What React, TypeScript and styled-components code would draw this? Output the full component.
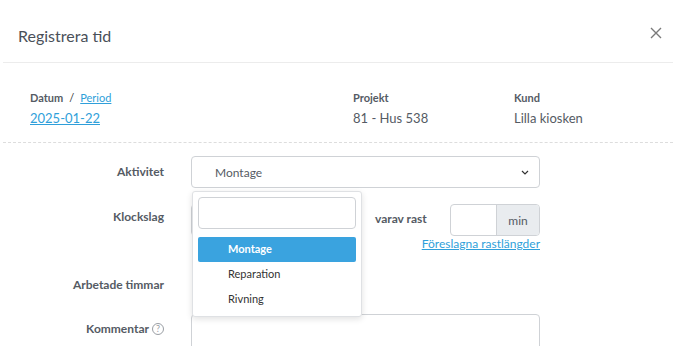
import { createGlobalStyle, styled } from 'styled-components';

const GlobalStyle = createGlobalStyle`
  * { box-sizing: border-box; }
  body {
    margin: 0;
    background: #fff;
    font-family: Lato, "Liberation Sans", sans-serif;
    color: #555b64;
  }
`;

const Modal = styled.div`
  width: 673px;
  height: 346px;
  overflow: hidden;
  padding-left: 3px;
`;

const Header = styled.header`
  height: 63px;
  display: flex;
  align-items: center;
  justify-content: space-between;
  padding: 8px 7px 0 15px;
  border-bottom: 1px solid #ececec;
`;

const Title = styled.h2`
  margin: 0;
  font-size: 16px;
  font-weight: 400;
  color: #4a5059;
`;

const CloseButton = styled.button`
  border: 0;
  background: none;
  padding: 0;
  width: 20px;
  height: 20px;
  margin-top: -5px;
  display: flex;
  align-items: center;
  justify-content: center;
  color: #777;
`;

const Info = styled.section`
  display: grid;
  grid-template-columns: 323px 161px 1fr;
  padding: 28px 0 0 27px;
  height: 80px;
  border-bottom: 1px dashed #ddd;
`;

const InfoLabel = styled.div`
  font-size: 11px;
  font-weight: 700;
  color: #555b64;
  height: 16px;
  display: flex;
  align-items: baseline;
  gap: 6px;
`;

const Slash = styled.span`
  font-weight: 400;
  color: #333;
`;

const SmallLink = styled.a`
  font-size: 11px;
  font-weight: 400;
  color: #2f9fda;
  text-decoration: underline;
`;

const InfoValue = styled.div`
  margin-top: 3px;
  font-size: 13px;
  color: #555b64;
`;

const DateLink = styled.a`
  font-size: 13px;
  color: #2f9fda;
  text-decoration: underline;
`;

const Form = styled.div`
  position: relative;
  padding-top: 13px;
  display: grid;
  grid-template-columns: 161px 349px;
  column-gap: 27px;
`;

const Label = styled.label<{ top: number }>`
  grid-column: 1;
  text-align: right;
  font-size: 12px;
  font-weight: 700;
  color: #555b64;
  padding-top: ${(p) => p.top}px;
  display: flex;
  justify-content: flex-end;
  align-items: center;
  gap: 3px;
  height: max-content;
`;

const Field = styled.div<{ mb: number }>`
  grid-column: 2;
  margin-bottom: ${(p) => p.mb}px;
`;

const Select = styled.div`
  height: 32px;
  border: 1px solid #cfd2d6;
  border-radius: 4px;
  display: flex;
  align-items: center;
  justify-content: space-between;
  padding: 0 10px 0 23px;
  font-size: 12px;
  color: #555b64;
`;

const TimeRow = styled.div`
  display: flex;
  align-items: flex-start;
`;

const TimeInputs = styled.div`
  flex: none;
  width: 170px;
  height: 32px;
  border: 1px solid #cfd2d6;
  border-radius: 4px;
`;

const BreakLabel = styled.span`
  flex: none;
  margin: 7px 0 0 14px;
  font-size: 12px;
  font-weight: 700;
  color: #555b64;
`;

const InputGroup = styled.div`
  display: flex;
  margin-left: auto;
  height: 32px;
  border: 1px solid #cfd2d6;
  border-radius: 4px;
  overflow: hidden;
`;

const MinInput = styled.div`
  width: 45px;
`;

const Addon = styled.span`
  width: 43px;
  background: #e9ecef;
  border-left: 1px solid #cfd2d6;
  display: flex;
  align-items: center;
  justify-content: center;
  font-size: 12px;
  color: #555b64;
`;

const LinkRow = styled.div`
  display: flex;
  justify-content: flex-end;
  margin-top: 0;
`;

const SuggestLink = styled.a`
  font-size: 12px;
  color: #2f9fda;
  text-decoration: underline;
  white-space: nowrap;
`;

const HoursValue = styled.div`
  height: 32px;
`;

const TextArea = styled.div`
  height: 60px;
  border: 1px solid #cfd2d6;
  border-radius: 4px;
`;

const Help = styled.span`
  display: inline-flex;
  width: 12px;
  height: 12px;
  border: 1px solid #9a9ea4;
  border-radius: 50%;
  align-items: center;
  justify-content: center;
  font-size: 9px;
  font-weight: 400;
  color: #9a9ea4;
`;

const Dropdown = styled.div`
  position: absolute;
  left: 189px;
  top: 48px;
  width: 170px;
  background: #fff;
  border: 1px solid #dfe1e4;
  border-radius: 3px;
  box-shadow: 0 2px 6px rgba(0, 0, 0, 0.12);
  padding: 5px 5px 4px 5px;
`;

const Search = styled.div`
  height: 32px;
  border: 1px solid #cfd2d6;
  border-radius: 4px;
  margin-bottom: 8px;
`;

const Option = styled.div<{ active?: boolean }>`
  height: 25px;
  display: flex;
  align-items: center;
  padding: 0 0 3px 30px;
  font-size: 11px;
  border-radius: 2px;
  font-weight: ${(p) => (p.active ? 700 : 400)};
  background: ${(p) => (p.active ? '#3aa3df' : 'transparent')};
  color: ${(p) => (p.active ? '#fff' : '#333')};
`;

export default function App() {
  return (
    <Modal>
      <GlobalStyle />
      <Header>
        <Title>Registrera tid</Title>
        <CloseButton>
          <svg width="12" height="12" viewBox="0 0 12 12">
            <path d="M1 1l10 10M11 1L1 11" stroke="#7a7a7a" strokeWidth="1.4" />
          </svg>
        </CloseButton>
      </Header>
      <Info>
        <div>
          <InfoLabel>
            Datum <Slash>/</Slash> <SmallLink>Period</SmallLink>
          </InfoLabel>
          <InfoValue>
            <DateLink>2025-01-22</DateLink>
          </InfoValue>
        </div>
        <div>
          <InfoLabel>Projekt</InfoLabel>
          <InfoValue>81 - Hus 538</InfoValue>
        </div>
        <div>
          <InfoLabel>Kund</InfoLabel>
          <InfoValue>Lilla kiosken</InfoValue>
        </div>
      </Info>
      <Form>
        <Label top={8}>Aktivitet</Label>
        <Field mb={16}>
          <Select>
            Montage
            <svg width="8" height="5" viewBox="0 0 8 5">
              <path d="M1 1l3 3 3-3" stroke="#333" strokeWidth="1.2" fill="none" />
            </svg>
          </Select>
        </Field>
        <Label top={5}>Klockslag</Label>
        <Field mb={18}>
          <TimeRow>
            <TimeInputs />
            <BreakLabel>varav rast</BreakLabel>
            <InputGroup>
              <MinInput />
              <Addon>min</Addon>
            </InputGroup>
          </TimeRow>
          <LinkRow>
            <SuggestLink>Föreslagna rastlängder</SuggestLink>
          </LinkRow>
        </Field>
        <Label top={8}>Arbetade timmar</Label>
        <Field mb={13}>
          <HoursValue />
        </Field>
        <Label top={7}>
          Kommentar <Help>?</Help>
        </Label>
        <Field mb={0}>
          <TextArea />
        </Field>
        <Dropdown>
          <Search />
          <Option active>Montage</Option>
          <Option>Reparation</Option>
          <Option>Rivning</Option>
        </Dropdown>
      </Form>
    </Modal>
  );
}
